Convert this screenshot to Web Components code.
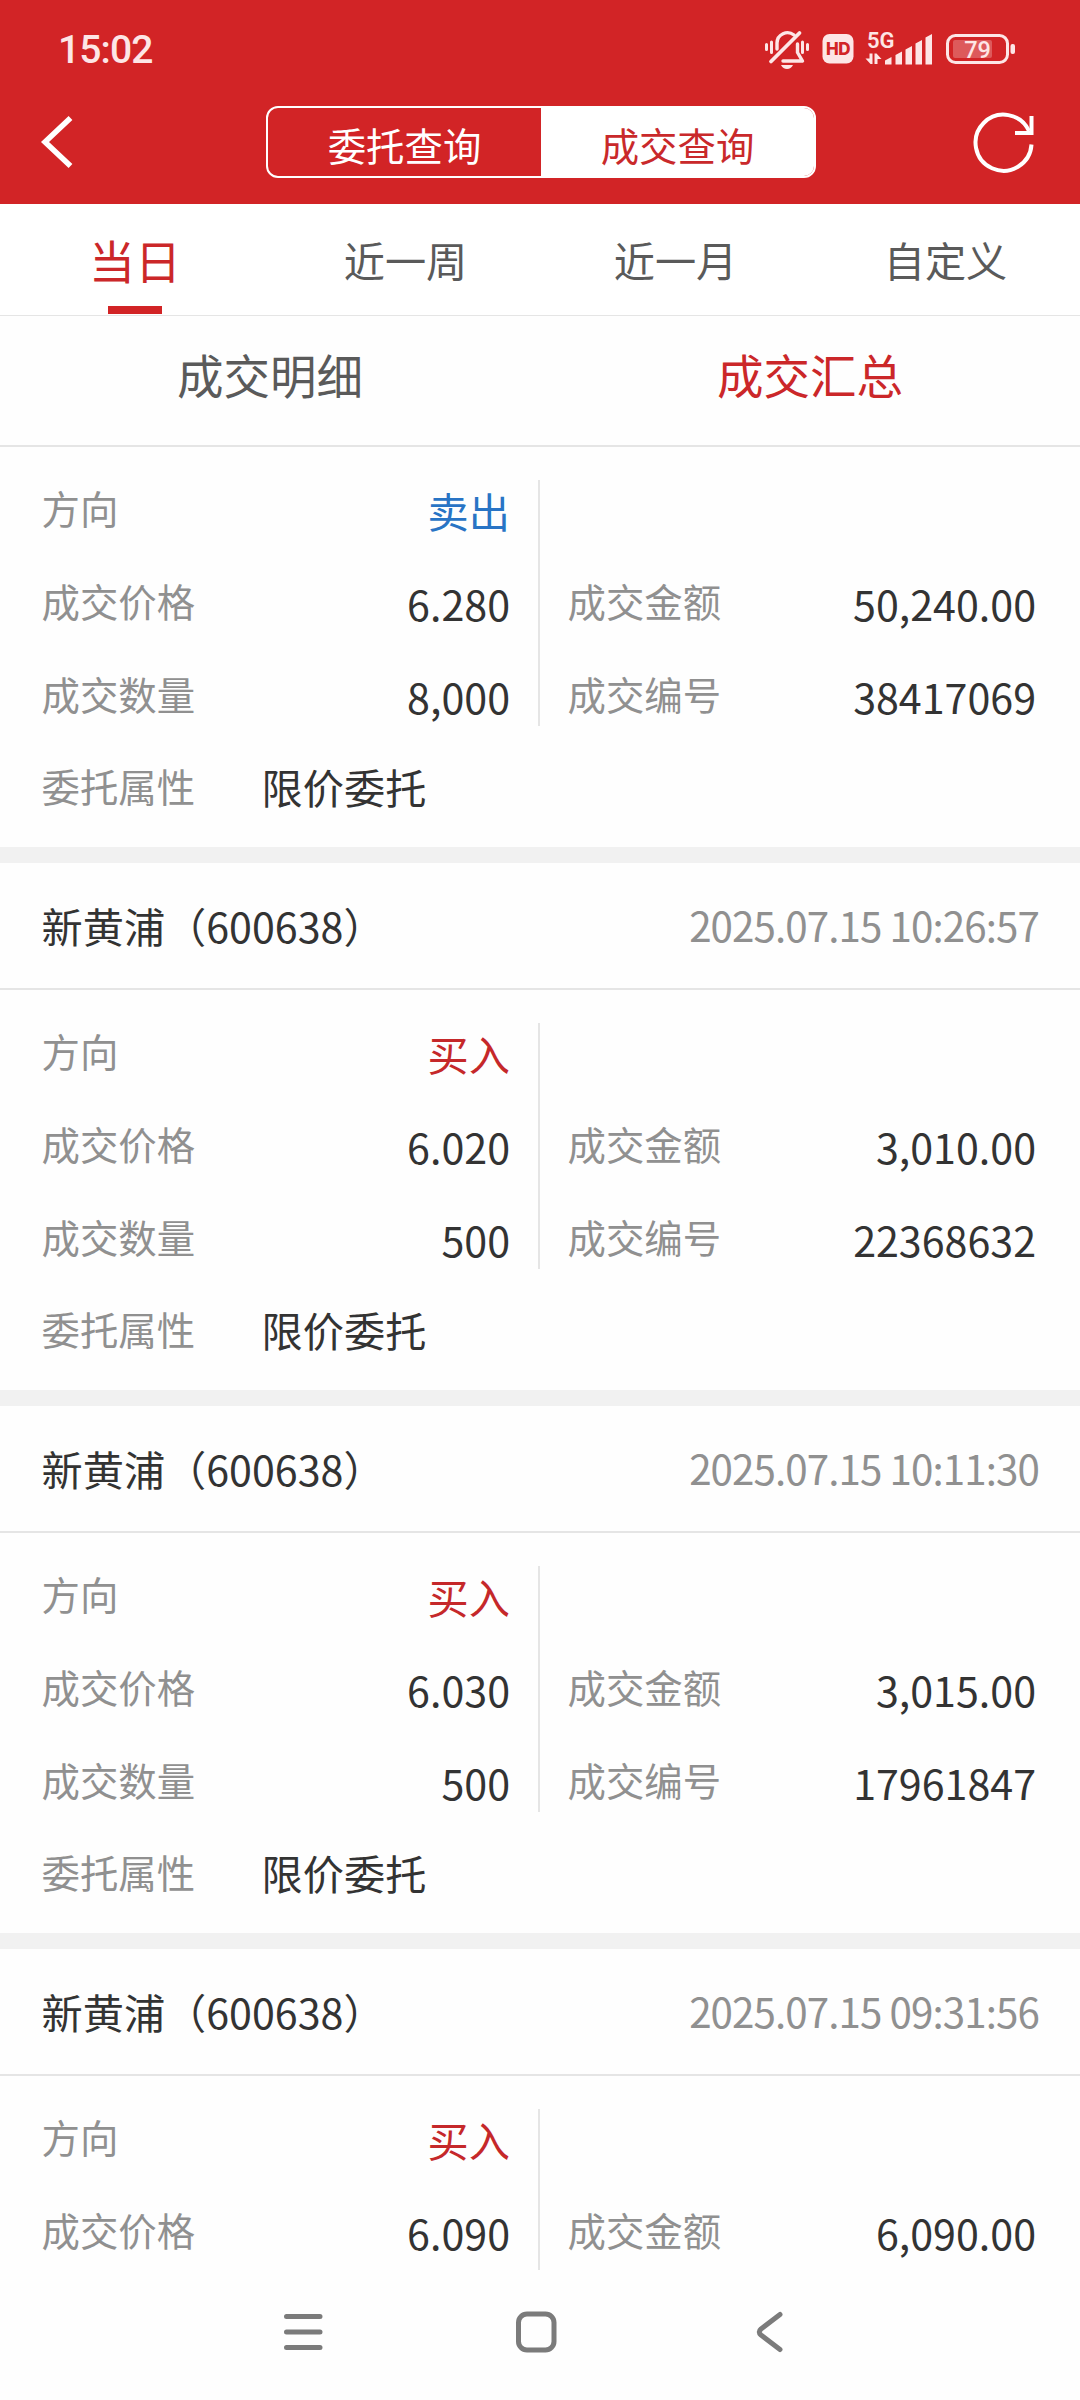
<!DOCTYPE html>
<html lang="zh-CN">
<head>
<meta charset="UTF-8">
<title>成交查询</title>
<style>
    html, body {
        margin: 0;
        padding: 0;
    }
    body {
        --brand: #d22426;
        --line: #e5e5e5;
        width: 1080px;
        height: 2400px;
        overflow: hidden;
        background: #fefefe;
        color: #333;
        font-family: "Noto Sans CJK SC", sans-serif;
    }
</style>
</head>
<body>
<trade-app></trade-app>

<script>
class StatusBar extends HTMLElement {
    connectedCallback() {
        this.attachShadow({ mode: 'open' });
        this.shadowRoot.innerHTML = `
            <style>
                :host {
                    display: flex;
                    justify-content: space-between;
                    height: 80px;
                    padding: 0 60px 0 58px;
                    color: #fde6e6;
                }
                .time {
                    margin-top: 20px;
                    font: 500 39px/60px Roboto, sans-serif;
                    letter-spacing: -0.9px;
                }
                svg {
                    display: block;
                    margin-top: 24px;
                }
            </style>
            <span class="time">15:02</span>
            <svg width="260" height="50" viewBox="760 24 260 50" fill="none" stroke="currentColor">
                <g stroke-width="3" stroke-linecap="round" stroke-linejoin="round">
                    <path d="M766.5 44.5v5M771.5 42v10.500M807.500 44.5v5M802.500 42v10.500"/>
                    <path stroke-width="3.400" d="M777 49V43a10.500 10.500 0 0 1 17-8"/>
                    <path stroke-width="3.400" d="M797.500 44v8.500l5 8.500H783"/>
                    <path stroke-width="3.800" d="M799.500 33L771 61.500"/>
                </g>
                <path fill="currentColor" stroke="none" d="M781 65h12q-2 4-6 4t-6-4z"/>
                <rect x="822.500" y="34" width="31" height="29.500" rx="7" fill="currentColor" stroke="none"/>
                <text x="838" y="55" text-anchor="middle" font-family="Inter, sans-serif" font-weight="800" font-size="17" letter-spacing="-.5" fill="#d22426" stroke="none">HD</text>
                <text x="867" y="47.500" font-family="Roboto, sans-serif" font-weight="600" font-size="22" fill="currentColor" stroke="none">5G</text>
                <g fill="currentColor" stroke="none">
                    <path d="M869.500 53.500h3V64h-2l-5-5.500h4zM874.500 64h3v-5h4l-5-5.500h-2z"/>
                    <path d="M885 60.500l6.500-3.500v7.500H885zM895.500 55l6.500-3.500v13h-6.500zM905.500 49.500l6.500-3.500v18.500h-6.500zM915.500 43.500l6.500-3.500v24.500h-6.500zM925.500 37.500l6.500-3.500v30.500h-6.500z"/>
                    <rect x="953" y="40" width="39" height="18" rx="2" fill-opacity=".28"/>
                    <rect x="1010.500" y="44" width="4.500" height="10" rx="2"/>
                </g>
                <rect x="947.500" y="35.500" width="60" height="27" rx="8" stroke-width="3"/>
                <text x="977.500" y="57.500" text-anchor="middle" font-family="Roboto, sans-serif" font-weight="500" font-size="23.500" fill="currentColor" stroke="none">79</text>
            </svg>
        `;
    }
}
customElements.define('status-bar', StatusBar);

class TitleBar extends HTMLElement {
    connectedCallback() {
        this.attachShadow({ mode: 'open' });
        this.shadowRoot.innerHTML = `
            <style>
                :host {
                    display: flex;
                    justify-content: space-between;
                    align-items: center;
                    height: 124px;
                    padding: 0 44px 0 38px;
                    color: #fff;
                }
                svg {
                    display: block;
                }
                .back {
                    margin-right: 34px;
                }
                .segment {
                    display: flex;
                    box-sizing: border-box;
                    width: 550px;
                    height: 72px;
                    border: 2px solid #fff;
                    border-radius: 12px;
                    overflow: hidden;
                    font-size: 38.4px;
                    line-height: 73px;
                    text-align: center;
                }
                .segment span {
                    flex: 1;
                }
                .segment .on {
                    background: #fff;
                    color: #c9292b;
                }
            </style>
            <svg class="back" width="40" height="60" viewBox="38 112 40 60" fill="none" stroke="#fff" stroke-width="5.500">
                <path d="M70.500 118L45 142L70.500 166"/>
            </svg>
            <div class="segment"><span>委托查询</span><span class="on">成交查询</span></div>
            <svg width="66" height="66" viewBox="970 109 66 66" fill="none" stroke="#fff" stroke-width="4">
                <path d="M1031.500 144.500A28 28 0 1 1 1029 131"/>
                <path d="M1031.500 116v17H1015"/>
            </svg>
        `;
    }
}
customElements.define('title-bar', TitleBar);

class PeriodTabs extends HTMLElement {
    connectedCallback() {
        this.attachShadow({ mode: 'open' });
        const tabs = ['当日', '近一周', '近一月', '自定义'];
        this.shadowRoot.innerHTML = `
            <style>
                :host {
                    display: grid;
                    grid-template-columns: repeat(4, 1fr);
                    height: 111px;
                    border-bottom: 1px solid var(--line);
                    background: #fff;
                    color: #5a5a5a;
                    font-size: 41.2px;
                    line-height: 102px;
                    text-align: center;
                }
                span {
                    display: flex;
                    flex-direction: column;
                    align-items: center;
                    padding: 4px 0 0 1px;
                }
                .on {
                    padding-left: 0;
                    color: #cb2729;
                    font-size: 46px;
                }
                .on::after {
                    content: '';
                    width: 54px;
                    height: 8px;
                    margin-top: -4px;
                    background: var(--brand);
                }
            </style>
            ${tabs.map((tab, i) => `<span class="${i === 0 ? 'on' : ''}">${tab}</span>`).join('')}
        `;
    }
}
customElements.define('period-tabs', PeriodTabs);

class ViewTabs extends HTMLElement {
    connectedCallback() {
        this.attachShadow({ mode: 'open' });
        this.shadowRoot.innerHTML = `
            <style>
                :host {
                    display: grid;
                    grid-template-columns: 1fr 1fr;
                    height: 129px;
                    border-bottom: 2px solid var(--line);
                    color: #5a5a5a;
                    font-size: 46.5px;
                    line-height: 115px;
                    text-align: center;
                }
                .on {
                    color: #cb2729;
                }
            </style>
            <span>成交明细</span>
            <span class="on">成交汇总</span>
        `;
    }
}
customElements.define('view-tabs', ViewTabs);

class FieldRow extends HTMLElement {
    connectedCallback() {
        this.attachShadow({ mode: 'open' });
        this.shadowRoot.innerHTML = `
            <style>
                :host {
                    display: flex;
                    justify-content: space-between;
                    height: 55px;
                    color: #333;
                    font-size: 41.2px;
                    line-height: 55px;
                    white-space: nowrap;
                }
                .label {
                    color: #909090;
                    font-size: 38.4px;
                }
                .value {
                    padding-top: var(--value-shift, 3px);
                }
            </style>
            <span class="label">${this.getAttribute('label')}</span>
            <span class="value"><slot></slot></span>
        `;
    }
}
customElements.define('field-row', FieldRow);

class TradeCard extends HTMLElement {
    set trade(trade) {
        if (!this.shadowRoot) this.attachShadow({ mode: 'open' });
        const header = trade.time ? `
            <header>
                <span class="name">${trade.name}（${trade.code}）</span>
                <time>${trade.time}</time>
            </header>` : '';
        const row = (label, value) => value ? `<field-row label="${label}">${value}</field-row>` : '';
        this.shadowRoot.innerHTML = `
            <style>
                :host {
                    display: block;
                }
                header {
                    display: flex;
                    justify-content: space-between;
                    height: 125px;
                    padding: 0 41px 0 41.5px;
                    border-top: 16px solid #f1f1f1;
                    border-bottom: 2px solid var(--line);
                    font-size: 41.2px;
                    line-height: 125px;
                }
                time {
                    margin-top: -1px;
                    color: #909090;
                    font-size: 40.3px;
                    letter-spacing: -0.900px;
                }
                .body {
                    height: 367px;
                    padding: 33px 44px 0 41.5px;
                }
                .columns {
                    display: grid;
                    grid-template-columns: 468.5px 1fr;
                    height: 246px;
                }
                .column {
                    display: flex;
                    flex-direction: column;
                    gap: 38px;
                }
                .right {
                    margin-left: 28px;
                    padding-left: 27.5px;
                    border-left: 2px solid var(--line);
                }
                .right::before {
                    content: '';
                    height: 55px;
                }
                .sell {
                    color: #2874c5;
                }
                .buy {
                    color: #c5282a;
                }
                .attr {
                    --value-shift: 1px;
                    justify-content: flex-start;
                    gap: 66.5px;
                    margin-top: 32px;
                }
            </style>
            ${header}
            <div class="body">
                <div class="columns">
                    <div class="column">
                        <field-row label="方向"><span class="${trade.side === '买入' ? 'buy' : 'sell'}">${trade.side}</span></field-row>
                        ${row('成交价格', trade.price)}
                        ${row('成交数量', trade.count)}
                    </div>
                    <div class="column right">
                        ${row('成交金额', trade.amount)}
                        ${row('成交编号', trade.id)}
                    </div>
                </div>
                ${trade.attr ? `<field-row class="attr" label="委托属性">${trade.attr}</field-row>` : ''}
            </div>
        `;
    }
}
customElements.define('trade-card', TradeCard);

class NavBar extends HTMLElement {
    connectedCallback() {
        this.attachShadow({ mode: 'open' });
        this.shadowRoot.innerHTML = `
            <style>
                :host {
                    display: block;
                    height: 130px;
                    background: #fefefe;
                }
                svg {
                    display: block;
                }
            </style>
            <svg width="1080" height="130" viewBox="0 2270 1080 130" fill="none" stroke="#7b7b7b" stroke-width="5" stroke-linecap="round" stroke-linejoin="round">
                <path d="M286.500 2316.500h33.500M286.500 2332h33.500M286.500 2347.500h33.500"/>
                <rect x="518.500" y="2314" width="35.500" height="36" rx="8.500"/>
                <path d="M780 2314.500L761 2329q-3.500 3 0 6L780 2349.500"/>
            </svg>
        `;
    }
}
customElements.define('nav-bar', NavBar);

class TradeApp extends HTMLElement {
    connectedCallback() {
        this.attachShadow({ mode: 'open' });
        this.trades = [
            {side: '卖出', price: '6.280', count: '8,000', amount: '50,240.00', id: '38417069', attr: '限价委托'},
            {name: '新黄浦', code: '600638', time: '2025.07.15 10:26:57', side: '买入', price: '6.020', count: '500', amount: '3,010.00', id: '22368632', attr: '限价委托'},
            {name: '新黄浦', code: '600638', time: '2025.07.15 10:11:30', side: '买入', price: '6.030', count: '500', amount: '3,015.00', id: '17961847', attr: '限价委托'},
            // Only the first two rows of the last card fit above the nav bar
            {name: '新黄浦', code: '600638', time: '2025.07.15 09:31:56', side: '买入', price: '6.090', amount: '6,090.00'}
        ];
        this.render();
    }

    render() {
        this.shadowRoot.innerHTML = `
            <style>
                :host {
                    display: flex;
                    flex-direction: column;
                    height: 2400px;
                }
                .top {
                    flex: none;
                    background: var(--brand);
                }
                period-tabs, view-tabs, nav-bar {
                    flex: none;
                }
                .list {
                    flex: 1;
                    min-height: 0;
                    overflow: hidden;
                }
            </style>
            <div class="top">
                <status-bar></status-bar>
                <title-bar></title-bar>
            </div>
            <period-tabs></period-tabs>
            <view-tabs></view-tabs>
            <div class="list"></div>
            <nav-bar></nav-bar>
        `;
        const list = this.shadowRoot.querySelector('.list');
        this.trades.forEach(trade => {
            const card = document.createElement('trade-card');
            card.trade = trade;
            list.appendChild(card);
        });
    }
}
customElements.define('trade-app', TradeApp);
</script>
</body>
</html>
